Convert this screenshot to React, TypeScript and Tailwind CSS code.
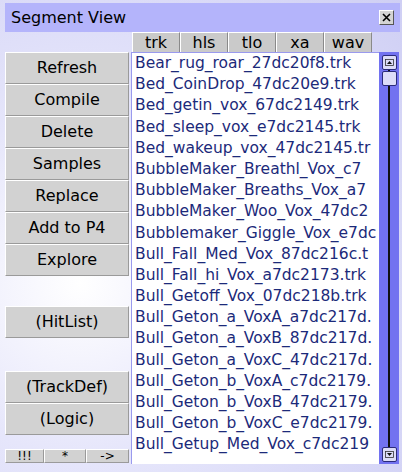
import React from "react";

const files = [
  "Bear_rug_roar_27dc20f8.trk",
  "Bed_CoinDrop_47dc20e9.trk",
  "Bed_getin_vox_67dc2149.trk",
  "Bed_sleep_vox_e7dc2145.trk",
  "Bed_wakeup_vox_47dc2145.tr",
  "BubbleMaker_Breathl_Vox_c7",
  "BubbleMaker_Breaths_Vox_a7",
  "BubbleMaker_Woo_Vox_47dc2",
  "Bubblemaker_Giggle_Vox_e7dc",
  "Bull_Fall_Med_Vox_87dc216c.t",
  "Bull_Fall_hi_Vox_a7dc2173.trk",
  "Bull_Getoff_Vox_07dc218b.trk",
  "Bull_Geton_a_VoxA_a7dc217d.",
  "Bull_Geton_a_VoxB_87dc217d.",
  "Bull_Geton_a_VoxC_47dc217d.",
  "Bull_Geton_b_VoxA_c7dc2179.",
  "Bull_Geton_b_VoxB_47dc2179.",
  "Bull_Geton_b_VoxC_e7dc2179.",
  "Bull_Getup_Med_Vox_c7dc219",
];

const tabs = ["trk", "hls", "tlo", "xa", "wav"];

const font = { fontFamily: '"Comic Sans MS", "DejaVu Sans", sans-serif' };

function Btn({ label }: { label: string }) {
  return (
    <button
      type="button"
      className="h-[32px] w-full border border-t-white border-l-white border-b-[#9a9a9a] border-r-[#9a9a9a] bg-[#d2d2d2] text-[16px] text-black"
    >
      {label}
    </button>
  );
}

export default function App() {
  return (
    <div
      className="h-[472px] w-[402px] overflow-hidden bg-[radial-gradient(circle_at_20%_60%,#ffffff_0%,#e6e6fb_40%,#cfcff4_100%)] pt-[3px]"
      style={font}
    >
      {/* Title bar */}
      <div className="ml-[5px] mr-[2px] flex h-[29px] items-center justify-between bg-[#b4b4fb] pl-[6px] pr-[6px]">
        <span className="text-[16px] text-black">Segment View</span>
        <button
          type="button"
          className="flex h-[15px] w-[15px] items-center justify-center border border-t-white border-l-white border-b-[#555] border-r-[#555] bg-[#d4d4d4]"
        >
          <svg width="9" height="9" viewBox="0 0 9 9">
            <path d="M1 1L8 8M8 1L1 8" stroke="#000" strokeWidth="1.6" />
          </svg>
        </button>
      </div>

      {/* Tabs */}
      <div className="ml-[132px] flex h-[20px]">
        {tabs.map((t) => (
          <div
            key={t}
            className="flex h-[20px] w-[48px] items-center justify-center border border-t-white border-l-white border-r-[#8a8a8a] border-b-0 bg-[#cacaca] text-[16px] leading-none text-black"
          >
            {t}
          </div>
        ))}
      </div>

      <div className="flex h-[412px]">
        {/* Left column */}
        <div className="ml-[5px] flex w-[124px] flex-col">
          {["Refresh", "Compile", "Delete", "Samples", "Replace", "Add to P4", "Explore"].map((b) => (
            <Btn key={b} label={b} />
          ))}
          <div className="h-[30px]" />
          <Btn label="(HitList)" />
          <div className="h-[33px]" />
          <Btn label="(TrackDef)" />
          <Btn label="(Logic)" />
          <div className="h-[14px]" />
          <div className="flex h-[14px]">
            {[
              ["!!!", "w-[39px]"],
              ["*", "w-[42px]"],
              ["->", "w-[43px]"],
            ].map(([l, w]) => (
              <button
                key={l}
                type="button"
                className={`${w} flex h-[14px] items-center justify-center border border-t-white border-l-white border-b-[#9a9a9a] border-r-[#9a9a9a] bg-[#d2d2d2] text-[12px] leading-none text-black`}
              >
                {l}
              </button>
            ))}
          </div>
        </div>

        {/* File list */}
        <div className="ml-[2px] h-[412px] w-[248px] overflow-hidden border-l border-t border-[#9a9aee] bg-white pl-[3px]">
          {files.map((f) => (
            <div key={f} className="h-[21.2px] whitespace-nowrap text-[15.5px] leading-[21.2px] text-[#1c2a7a]">
              {f}
            </div>
          ))}
        </div>

        {/* Scrollbar */}
        <div className="relative flex h-[412px] w-[20px] flex-col items-center bg-[#7272f0] pt-[3px] pb-[2px]">
          <div className="absolute bottom-[14px] left-[9px] top-[18px] w-[2px] bg-[#111]" />
          <div className="relative flex h-[15px] w-[15px] items-center justify-center rounded-[2px] border border-[#2a2a7a] bg-[#dcdcf8]">
            <svg width="9" height="7" viewBox="0 0 9 7">
              <rect x="0.5" y="0.5" width="8" height="6" fill="none" stroke="#333" strokeWidth="0.8" />
              <path d="M2 5L4.5 2L7 5Z" fill="#111" />
            </svg>
          </div>
          <div className="relative mt-[1px] h-[15px] w-[15px] rounded-[2px] border border-[#2a2a7a] bg-[#dcdcf8]" />
          <div className="flex-1" />
          <div className="relative flex h-[15px] w-[15px] items-center justify-center rounded-[2px] border border-[#2a2a7a] bg-[#dcdcf8]">
            <svg width="9" height="7" viewBox="0 0 9 7">
              <rect x="0.5" y="0.5" width="8" height="6" fill="none" stroke="#333" strokeWidth="0.8" />
              <path d="M2 2L4.5 5L7 2Z" fill="#111" />
            </svg>
          </div>
        </div>
      </div>
    </div>
  );
}
